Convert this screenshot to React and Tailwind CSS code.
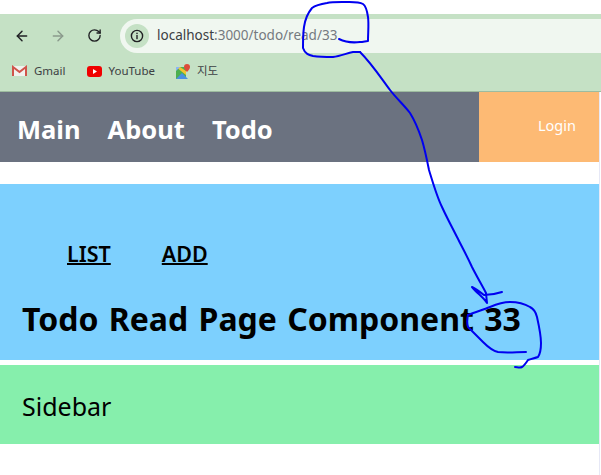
import React from "react";
import { ArrowLeft, ArrowRight, RotateCw } from "lucide-react";

const uiFont = "font-['Noto_Sans','Noto_Sans_CJK_KR',sans-serif]";

function InfoIcon() {
    return (
        <svg width="14" height="14" viewBox="0 0 14 14" fill="none">
            <circle cx="7" cy="7" r="5.6" stroke="#202124" strokeWidth="1.4" />
            <rect x="6.3" y="6" width="1.4" height="4.2" fill="#202124" />
            <rect x="6.3" y="3.7" width="1.4" height="1.4" fill="#202124" />
        </svg>
    );
}

function GmailIcon() {
    return (
        <svg width="15" height="12" viewBox="0 0 15 12">
            <rect x="1" y="1" width="13" height="10" fill="#f1f1ee" />
            <path d="M1 11V2l6.5 5L14 2v9" fill="none" stroke="#d0544a" strokeWidth="2" />
        </svg>
    );
}

function YoutubeIcon() {
    return (
        <svg width="15" height="11" viewBox="0 0 15 11">
            <rect width="15" height="11" rx="3" fill="#f00000" />
            <path d="M6 3l4 2.5L6 8z" fill="#fff" />
        </svg>
    );
}

function MapsIcon() {
    return (
        <svg width="14" height="15" viewBox="0 0 14 15">
            <path d="M0 3h10v12H0z" fill="#4caf50" />
            <path d="M0 15l6-6 6 6z" fill="#4a90e2" />
            <path d="M0 3l10 8V7L4 3z" fill="#f4c430" />
            <path d="M0 3h4L0 7z" fill="#8ab4f8" />
            <path d="M11 0a3 3 0 0 1 3 3c0 2-3 5-3 5S8 5 8 3a3 3 0 0 1 3-3z" fill="#dd4b39" />
        </svg>
    );
}

function Bookmark({ icon, label, className }) {
    return (
        <div className={`flex items-center gap-[7px] ${className}`}>
            {icon}
            <span className="text-[11.5px] text-[#3c4043]">{label}</span>
        </div>
    );
}

function BrowserBar() {
    return (
        <div className={`h-[78px] bg-[#c5e1c5] border-b border-[#9dbb9f] ${uiFont}`}>
            <div className="flex items-center h-[40px] pt-[3px]">
                <ArrowLeft size={16} strokeWidth={2.2} className="ml-[14px] text-[#202124]" />
                <ArrowRight size={16} strokeWidth={2.2} className="ml-[20px] text-[#8a9a8c]" />
                <RotateCw size={15} strokeWidth={2.2} className="ml-[21px] text-[#202124]" />
                <div className="flex items-center flex-1 h-[34px] ml-[18px] pl-[5px] bg-[#f0f7f0] rounded-l-full">
                    <div className="flex items-center justify-center w-[24px] h-[24px] rounded-full bg-[#c5e1c5]">
                        <InfoIcon />
                    </div>
                    <span className="ml-[8px] text-[13.5px] text-[#3c4043]">
                        localhost<span className="text-[#757a7f]">:3000/todo/read/33</span>
                    </span>
                </div>
            </div>
            <div className="flex items-center h-[34px] pl-[12px]">
                <Bookmark icon={<GmailIcon />} label="Gmail" />
                <Bookmark icon={<YoutubeIcon />} label="YouTube" className="ml-[21px]" />
                <Bookmark icon={<MapsIcon />} label="지도" className="ml-[21px]" />
            </div>
        </div>
    );
}

function Ink() {
    return (
        <svg className="absolute inset-0 pointer-events-none" width="601" height="475" viewBox="0 0 601 475" fill="none" stroke="#0000f0" strokeWidth="2" strokeLinecap="round" strokeLinejoin="round">
            <path d="M339 39C345 42 352 43 360 42C363 42 366 41 368 41C368 32 369 24 368 17C367 10 366 6 363 4C358 1 350 2 342 2C336 2 331 2 327 3C321 4 316 5 312 8C307 14 305 20 304 27C303 34 303 42 303 48C305 54 309 55 313 56C320 57 327 57 333 57C341 56 347 53 353 52L360 52" />
            <path d="M360 52C372 64 381 78 390 90C397 99 404 105 410 113C415 121 419 131 422 140C425 150 427 160 429 170C433 183 437 197 442 207C447 218 452 227 457 237C462 247 467 256 472 267C477 277 482 285 486 293L487 303C484 298 477 293 472 287C476 289 480 292 484 295C490 295 496 294 502 292" />
            <path d="M468 315C475 312 483 310 490 307C497 304 503 302 510 302C518 302 525 304 530 307C534 309 536 313 537 317C539 326 541 335 541 343C541 349 540 354 538 357C535 358 531 359 528 360C526 363 524 366 522 367C520 368 517 367 515 367" />
            <path d="M468 315C467 319 467 324 468 327C473 332 478 337 483 342C488 347 493 351 498 352C507 353 517 352 526 352" />
        </svg>
    );
}

export default function App() {
    return (
        <div className={`relative w-[601px] h-[475px] overflow-hidden bg-white ${uiFont}`}>
            <div className="h-[14px]" />
            <BrowserBar />
            <div className="w-[600px] h-[383px] border-r border-[#e6e8f6]">
                <div className="flex h-[70px] bg-[#6b7280]">
                    <div className="flex flex-1 items-center gap-[27px] pt-[5px] pl-[17px] text-white text-[25.5px] font-bold">
                        <span>Main</span>
                        <span>About</span>
                        <span>Todo</span>
                    </div>
                    <div className="flex items-center w-[120px] pb-[2px] pl-[59px] bg-[#fdba74] text-white text-[14.5px]">
                        Login
                    </div>
                </div>
                <div className="h-[176px] mt-[22px] bg-[#7dd0fe]">
                    <div className="flex gap-[51px] pt-[54px] pl-[67px] text-[21.5px] font-semibold text-black underline decoration-2">
                        <span>LIST</span>
                        <span>ADD</span>
                    </div>
                    <div className="pt-[26px] pl-[22px] text-[32px] font-bold text-black leading-[46px] [word-spacing:2px]">
                        Todo Read Page Component 33
                    </div>
                </div>
                <div className="flex items-center h-[79px] mt-[5px] pt-[4px] pl-[22px] bg-[#86efac] text-[25px] text-black">
                    Sidebar
                </div>
            </div>
            <Ink />
        </div>
    );
}
